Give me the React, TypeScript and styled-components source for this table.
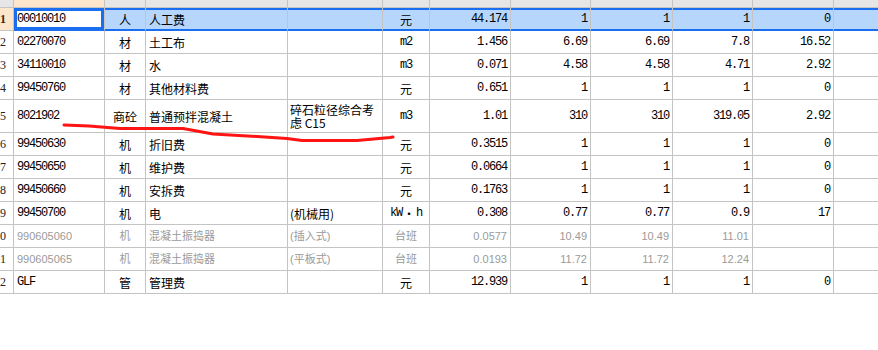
import React from "react";
import styled, { createGlobalStyle, css } from "styled-components";

const GlobalStyle = createGlobalStyle`
  html, body { margin: 0; padding: 0; background: #ffffff; }
  body { width: 878px; height: 350px; overflow: hidden; }
`;

const COLS = "14px 91px 41px 142px 95px 47px 81px 80px 82px 80px 81px 1fr";
const GRID = "#c4c4c4";
const BLUE = "#1a6ef0";
const SEL_BG = "#b7d6fb";
const PEACH = "#fde6cb";

type Row = {
  n: number;
  code: string;
  type: string;
  name: string;
  spec: string;
  unit: string;
  unitMono?: boolean;
  vals: string[];
  sel?: boolean;
  tall?: boolean;
  muted?: boolean;
};

const rows: Row[] = [
  { n: 1, code: "00010010", type: "人", name: "人工费", spec: "", unit: "元", vals: ["44.174", "1", "1", "1", "0"], sel: true },
  { n: 2, code: "02270070", type: "材", name: "土工布", spec: "", unit: "m2", unitMono: true, vals: ["1.456", "6.69", "6.69", "7.8", "16.52"] },
  { n: 3, code: "34110010", type: "材", name: "水", spec: "", unit: "m3", unitMono: true, vals: ["0.071", "4.58", "4.58", "4.71", "2.92"] },
  { n: 4, code: "99450760", type: "材", name: "其他材料费", spec: "", unit: "元", vals: ["0.651", "1", "1", "1", "0"] },
  { n: 5, code: "8021902", type: "商砼", name: "普通预拌混凝土", spec: "碎石粒径综合考虑 C15", unit: "m3", unitMono: true, vals: ["1.01", "310", "310", "319.05", "2.92"], tall: true },
  { n: 6, code: "99450630", type: "机", name: "折旧费", spec: "", unit: "元", vals: ["0.3515", "1", "1", "1", "0"] },
  { n: 7, code: "99450650", type: "机", name: "维护费", spec: "", unit: "元", vals: ["0.0664", "1", "1", "1", "0"] },
  { n: 8, code: "99450660", type: "机", name: "安拆费", spec: "", unit: "元", vals: ["0.1763", "1", "1", "1", "0"] },
  { n: 9, code: "99450700", type: "机", name: "电", spec: "(机械用)", unit: "kW・h", unitMono: true, vals: ["0.308", "0.77", "0.77", "0.9", "17"] },
  { n: 10, code: "990605060", type: "机", name: "混凝土振捣器", spec: "(插入式)", unit: "台班", vals: ["0.0577", "10.49", "10.49", "11.01", ""], muted: true },
  { n: 11, code: "990605065", type: "机", name: "混凝土振捣器", spec: "(平板式)", unit: "台班", vals: ["0.0193", "11.72", "11.72", "12.24", ""], muted: true },
  { n: 12, code: "GLF", type: "管", name: "管理费", spec: "", unit: "元", vals: ["12.939", "1", "1", "1", "0"] },
];

const Page = styled.div`
  width: 878px;
  height: 350px;
  overflow: hidden;
  background: #fff;
`;

const Sheet = styled.div`
  position: relative;
  width: 878px;
`;

const HeaderRow = styled.div`
  display: grid;
  grid-template-columns: ${COLS};
  height: 8px;
`;

const HeaderCell = styled.div<{ $active?: boolean; $last?: boolean }>`
  background: ${(p) => (p.$active ? PEACH : "#e6e6e6")};
  border-right: ${(p) => (p.$last ? "none" : `1px solid ${GRID}`)};
  border-bottom: 1px solid ${GRID};
`;

const DataRow = styled.div<{ $tall?: boolean }>`
  display: grid;
  grid-template-columns: ${COLS};
  height: ${(p) => (p.$tall ? 33 : 23)}px;
`;

const Cell = styled.div<{
  $align?: "left" | "center" | "right";
  $sel?: boolean;
  $last?: boolean;
  $muted?: boolean;
  $mono?: boolean;
  $pad?: number;
}>`
  display: flex;
  align-items: center;
  justify-content: ${(p) =>
    p.$align === "right" ? "flex-end" : p.$align === "center" ? "center" : "flex-start"};
  padding: 0 ${(p) => (p.$align === "right" ? 3 : 0)}px 0 ${(p) => (p.$align === "left" ? p.$pad ?? 3 : 0)}px;
  overflow: hidden;
  white-space: nowrap;
  border-right: ${(p) => (p.$last ? "none" : `1px solid ${GRID}`)};
  border-bottom: 1px solid ${GRID};
  color: ${(p) => (p.$muted ? "#9a9a9a" : "#000")};
  font-family: ${(p) =>
    p.$muted
      ? `"Liberation Sans", "Noto Sans CJK SC", sans-serif`
      : p.$mono
      ? `"Liberation Mono", "Noto Sans CJK SC", monospace`
      : `"Noto Sans CJK SC", "Liberation Sans", sans-serif`};
  font-size: ${(p) => (p.$muted ? 11 : 12)}px;
  letter-spacing: ${(p) => (p.$mono && !p.$muted ? "-1.2px" : "0")};
  line-height: 13px;
  ${(p) =>
    p.$sel &&
    css`
      background: ${SEL_BG};
      border-bottom-color: ${BLUE};
      box-shadow: inset 0 2px 0 ${BLUE}, inset 0 -1px 0 ${BLUE};
    `}
`;

const CjkText = styled.span`
  font-family: "Noto Sans CJK SC", sans-serif;
  font-size: 12px;
  letter-spacing: 0;
  margin: 0 1px;
`;

const WrapCell = styled(Cell)`
  white-space: normal;
  align-items: center;
  padding-left: 2px;
  padding-right: 0;
  word-break: break-all;
`;

const FocusCell = styled(Cell)`
  background: #ffffff;
  border-bottom-color: ${BLUE};
  box-shadow: inset 0 0 0 3px ${BLUE};
`;

const RowHead = styled.div<{ $sel?: boolean }>`
  display: flex;
  align-items: center;
  justify-content: flex-end;
  padding-right: 7px;
  overflow: hidden;
  white-space: nowrap;
  background: ${(p) => (p.$sel ? PEACH : "#fff")};
  border-right: 1px solid ${GRID};
  border-bottom: 1px solid ${GRID};
  font-family: "Liberation Serif", serif;
  font-size: 12px;
  font-weight: ${(p) => (p.$sel ? 700 : 400)};
  color: ${(p) => (p.$sel ? "#3a2a10" : "#222")};
`;

const Scribble = styled.svg`
  position: absolute;
  left: 0;
  top: 0;
  width: 878px;
  height: 300px;
  pointer-events: none;
`;

export default function App() {
  const headerCells = Array.from({ length: 12 }, (_, i) => i);
  return (
    <Page>
      <GlobalStyle />
      <Sheet>
        <HeaderRow>
          {headerCells.map((i) => (
            <HeaderCell key={i} $active={i === 1} $last={i === 11} />
          ))}
        </HeaderRow>
        {rows.map((r) => {
          const m = !!r.muted;
          const Code = r.sel ? FocusCell : Cell;
          return (
            <DataRow key={r.n} $tall={r.tall}>
              <RowHead $sel={r.sel}>{r.n}</RowHead>
              <Code $align="left" $mono $muted={m} $sel={false}>
                {r.code}
              </Code>
              <Cell $align="center" $sel={r.sel} $muted={m}>
                {r.type}
              </Cell>
              <Cell $align="left" $sel={r.sel} $muted={m}>
                {r.name}
              </Cell>
              {r.tall ? (
                <WrapCell $align="left" $sel={r.sel}>
                  {r.spec}
                </WrapCell>
              ) : (
                <Cell $align="left" $pad={2} $sel={r.sel} $muted={m}>
                  {r.spec}
                </Cell>
              )}
              <Cell $align="center" $sel={r.sel} $muted={m} $mono={r.unitMono}>
                {r.unit === "kW・h" ? (
                  <>
                    kW<CjkText>・</CjkText>h
                  </>
                ) : (
                  r.unit
                )}
              </Cell>
              {r.vals.map((v, i) => (
                <Cell key={i} $align="right" $mono $sel={r.sel} $muted={m}>
                  {v}
                </Cell>
              ))}
              <Cell $sel={r.sel} $last />
            </DataRow>
          );
        })}
        <Scribble viewBox="0 0 878 300">
          <path
            d="M64 125 L89 126 L120 128.5 L183 128.5 L213 134 L257 136.5 L287 138.5 L302 140.5 L357 140.5 L390 137.5 L393 137"
            fill="none"
            stroke="#ff1414"
            strokeWidth="3"
            strokeLinejoin="round"
            strokeLinecap="round"
          />
        </Scribble>
      </Sheet>
    </Page>
  );
}
